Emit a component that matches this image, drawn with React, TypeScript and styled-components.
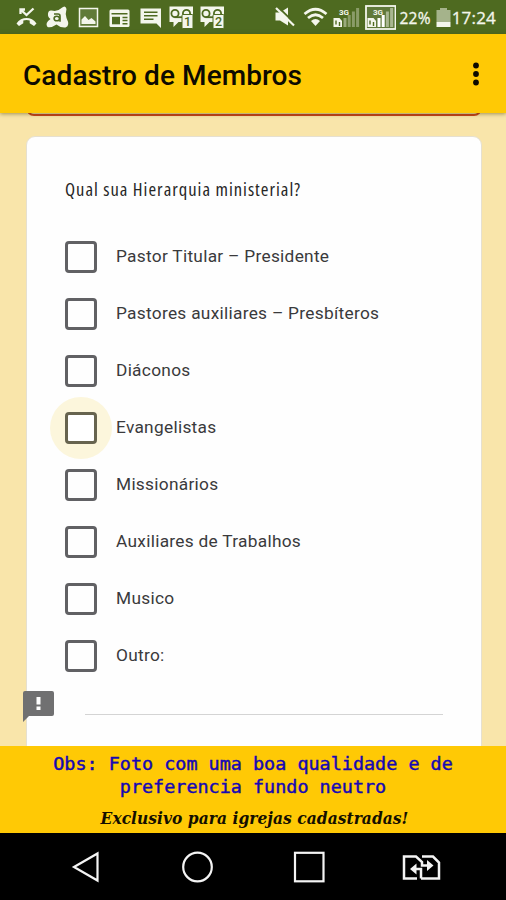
import React from 'react';
import styled, { createGlobalStyle, css } from 'styled-components';

const GlobalStyle = createGlobalStyle`
  * { box-sizing: border-box; }
  body { margin: 0; background: #000; }
`;

const Screen = styled.div`
  display: flex;
  flex-direction: column;
  width: 506px;
  height: 900px;
  overflow: hidden;
  font-family: Roboto, sans-serif;
`;

const StatusBar = styled.div`
  display: flex;
  align-items: center;
  flex: none;
  height: 34px;
  padding-left: 10.5px;
  background: #4e6a20;
  color: #f4f6ec;
`;

const StatusIcon = styled.svg<{ $gap?: number }>`
  flex: none;
  display: block;
  width: 31px;
  height: 34px;
  margin-left: ${(p) => p.$gap ?? 0}px;
  fill: #f4f6ec;
`;

const StatusText = styled.span<{ $size: number; $spacing: number; $gap: number }>`
  margin-left: ${(p) => p.$gap}px;
  font-family: 'Open Sans', sans-serif;
  font-size: ${(p) => p.$size}px;
  letter-spacing: ${(p) => p.$spacing}px;
  line-height: 34px;
  padding-top: 2px;
  white-space: nowrap;
  -webkit-text-stroke: 0.3px #f4f6ec;
`;

const Header = styled.header`
  position: relative;
  z-index: 1;
  display: flex;
  flex: none;
  align-items: center;
  justify-content: space-between;
  height: 79px;
  padding: 2px 23px 0 23px;
  background: #ffc905;
  box-shadow: 0 1px 4px rgba(70, 60, 0, 0.5);
`;

const Title = styled.h1`
  margin: 2px 0 0;
  font-size: 28px;
  font-weight: 500;
  letter-spacing: 0.08px;
  color: #0d0a00;
  white-space: nowrap;
`;

const MenuDots = styled.svg`
  width: 14px;
  height: 26px;
  margin-top: -2px;
  fill: #0d0a00;
`;

const Content = styled.main`
  position: relative;
  flex: 1;
  min-height: 0;
  overflow: hidden;
  padding: 0 24.5px 0 26px;
  background: #f9e5aa;
`;

const PreviousCard = styled.div`
  height: 22px;
  margin-top: -19px;
  border: 2px solid #c8401c;
  border-radius: 8px;
`;

const Card = styled.section`
  height: 660px;
  margin-top: 20px;
  padding: 40px 38px 0 38px;
  border: 1px solid #e6e0d0;
  border-radius: 9px;
  background: #fefefe;
`;

const Question = styled.h2`
  margin: 0 0 27px;
  height: 24px;
  font-family: 'Open Sans', 'Noto Sans', sans-serif;
  font-size: 18.5px;
  font-weight: 400;
  font-stretch: 80%;
  line-height: 24px;
  letter-spacing: 1px;
  color: #262626;
  white-space: nowrap;
`;

const OptionList = styled.div`
  position: relative;
  z-index: 0;
`;

const OptionRow = styled.label`
  display: flex;
  align-items: center;
  gap: 19px;
  height: 57px;
`;

const CheckBox = styled.span<{ $pressed?: boolean }>`
  position: relative;
  width: 32px;
  height: 32px;
  border: 3px solid #616164;
  border-radius: 4px;
  ${(p) =>
    p.$pressed &&
    css`
      border-color: #67644f;
      background: #fff;
      &::before {
        content: '';
        position: absolute;
        z-index: -1;
        inset: -18px;
        border-radius: 50%;
        background: #fcf6dc;
      }
    `}
`;

const OptionLabel = styled.span`
  margin-top: -1px;
  font-size: 17.3px;
  line-height: 24px;
  letter-spacing: 0.29px;
  color: #3a3a3c;
  white-space: nowrap;
`;

const OtherLine = styled.div`
  height: 1px;
  margin: 30px 0 0 20px;
  background: #d4d4d4;
`;

const FeedbackIcon = styled.svg`
  position: absolute;
  left: 23px;
  bottom: 24px;
  width: 31px;
  height: 31px;
`;

const Notice = styled.div`
  display: flex;
  flex: none;
  flex-direction: column;
  align-items: center;
  height: 87px;
  padding-top: 6px;
  background: #ffc905;
  text-align: center;
`;

const NoticeText = styled.p`
  margin: 0;
  width: 420px;
  font-family: 'DejaVu Sans Mono', monospace;
  font-size: 18.45px;
  line-height: 23px;
  color: #1608b4;
  -webkit-text-stroke: 0.45px #1608b4;
`;

const Exclusive = styled.p`
  margin: 9px 0 0 3px;
  font-family: 'DejaVu Serif Condensed', 'DejaVu Serif', serif;
  font-stretch: condensed;
  font-size: 17.2px;
  font-weight: 700;
  font-style: italic;
  line-height: 22px;
  letter-spacing: 0.05px;
  color: #140f00;
  white-space: nowrap;
`;

const NavBar = styled.nav`
  display: flex;
  flex: none;
  align-items: center;
  gap: 72px;
  height: 67px;
  padding-left: 65.5px;
  background: #000;
`;

const NavIcon = styled.svg`
  width: 40px;
  height: 40px;
  fill: none;
  stroke: #f4f4f4;
  stroke-width: 2.2;
`;

const options = [
  { label: 'Pastor Titular – Presidente' },
  { label: 'Pastores auxiliares – Presbíteros' },
  { label: 'Diáconos' },
  { label: 'Evangelistas', pressed: true },
  { label: 'Missionários' },
  { label: 'Auxiliares de Trabalhos' },
  { label: 'Musico' },
  { label: 'Outro:' },
];

const GREEN = '#4e6a20';
const BOX = '-15.5 0 31 34';

function Voicemail({ digit }: { digit: string }) {
  return (
    <StatusIcon viewBox={BOX}>
      <path d="M-12 6.5H11.5V22H-3L-8 27V22H-12Z" />
      <g fill="none" stroke={GREEN} strokeWidth="1.8">
        <circle cx="-6.5" cy="13.5" r="3.6" />
        <circle cx="5" cy="13.5" r="3.6" />
        <path d="M-7 17.2H1" />
      </g>
      <rect x="0.5" y="14.5" width="11" height="14" rx="1" stroke={GREEN} strokeWidth="1" />
      <text x="6" y="26.2" textAnchor="middle" fontFamily="Roboto" fontSize="12.5" fontWeight="500" fill={GREEN}>
        {digit}
      </text>
    </StatusIcon>
  );
}

function Signal({ boxed }: { boxed?: boolean }) {
  return (
    <StatusIcon viewBox={BOX} $gap={boxed ? 3 : 0}>
      {boxed && <rect x="-14.5" y="6" width="29.5" height="23" fill="#60793a" stroke="#f4f6ec" strokeWidth="1.8" />}
      <rect x="-3" y="18" width="3" height="9" fill={boxed ? '#fff' : '#9aaa7c'} />
      <rect x="1.2" y="15" width="3" height="12" fill={boxed ? '#fff' : '#8a9c68'} />
      <rect x="5.4" y="11.5" width="3" height="15.5" fill={boxed ? '#a9b690' : '#8a9c68'} />
      <rect x="9.6" y="8" width="3" height="19" fill={boxed ? '#a9b690' : '#8a9c68'} />
      <path d="M-13 18H-7L-4.5 21V27H-13Z" />
      <path d="M-10.5 20.5V24.5M-7 22V26" stroke={GREEN} strokeWidth="1.4" />
      <text x="-2.5" y="14.5" textAnchor="middle" fontFamily="Roboto" fontSize="8" fontWeight="700">
        3G
      </text>
    </StatusIcon>
  );
}

export default function App() {
  return (
    <>
      <GlobalStyle />
      <Screen>
        <StatusBar>
          <StatusIcon viewBox={BOX}>
            <path d="M-10 23.5C-5 16.2 5 16.2 10 23.5L7.5 26L3.2 23.2V20.6C1 19.9-1 19.9-3.2 20.6V23.2L-7.5 26Z" />
            <path d="M-6 14V9.5H-1.5M-5.5 10L0 15L7 8.5" fill="none" stroke="#f4f6ec" strokeWidth="2.3" />
          </StatusIcon>
          <StatusIcon viewBox={BOX}>
            <path d="M-6 10.5Q0 12 4 8Q8 4.5 9 9Q7.5 14 9 18Q13 26 8 27.5Q3 28-1 24.5Q-6 28-10 27Q-13 23-7 19Q-10 17-9.5 13.5Q-9 10-6 10.5Z" />
            <ellipse cx="-0.7" cy="18.5" rx="2.7" ry="2.3" fill="none" stroke={GREEN} strokeWidth="1.6" />
            <path d="M-3.5 14H0.5Q2.5 14 2.5 16V21.8" fill="none" stroke={GREEN} strokeWidth="1.6" />
          </StatusIcon>
          <StatusIcon viewBox={BOX}>
            <rect x="-9" y="8.5" width="18" height="18" fill="#607a38" stroke="#f4f6ec" strokeWidth="1.5" />
            <path d="M-7 24V19.5L-3.5 16L0 20L3 18L7 21.5V24Z" />
          </StatusIcon>
          <StatusIcon viewBox={BOX}>
            <rect x="-10" y="9.5" width="20" height="17.5" rx="1.5" />
            <path d="M-8 13.8H8M3 17.5H8M3 20.5H8M3 23.8H8" stroke={GREEN} strokeWidth="1.4" />
            <rect x="-7.5" y="16.8" width="8" height="7.5" fill={GREEN} />
          </StatusIcon>
          <StatusIcon viewBox={BOX}>
            <path d="M-10 8.5H10.5V28L6 23.5H-10Z" />
            <path d="M-6.5 12.3H7M-6.5 15.8H7M-6.5 19.3H3" stroke={GREEN} strokeWidth="1.5" />
          </StatusIcon>
          <Voicemail digit="1" />
          <Voicemail digit="2" />

          <StatusIcon viewBox={BOX} $gap={41}>
            <path d="M-9 12.5H-4.5L3.5 7.5V25.5L-4.5 20.5H-9Z" />
            <path d="M-6.5 7L11.5 24.5" stroke={GREEN} strokeWidth="1.8" />
            <path d="M-8.5 8L9.5 25.5" stroke="#f4f6ec" strokeWidth="2.2" />
          </StatusIcon>
          <StatusIcon viewBox={BOX}>
            <g fill="none" stroke="#f4f6ec" strokeWidth="2.7">
              <path d="M-11 14Q0 4.500 11 14" />
              <path d="M-7.5 18Q0 11.500 7.5 18" />
            </g>
            <path d="M-4.5 21Q0 17 4.5 21L0 26Z" />
          </StatusIcon>
          <Signal />
          <Signal boxed />
          <StatusText $size={15.5} $spacing={0.2} $gap={4}>22%</StatusText>
          <StatusIcon viewBox={BOX} $gap={-3}>
            <path d="M-3.5 8H3.5V10H7V22H-7V10H-3.5Z" fill="#a5b38b" />
            <rect x="-7" y="22" width="14" height="5" />
          </StatusIcon>
          <StatusText $size={17} $spacing={0.2} $gap={-7}>17:24</StatusText>
        </StatusBar>

        <Header>
          <Title>Cadastro de Membros</Title>
          <MenuDots viewBox="0 0 14 26">
            <circle cx="7" cy="4.5" r="2.9" />
            <circle cx="7" cy="13" r="2.9" />
            <circle cx="7" cy="21.5" r="2.9" />
          </MenuDots>
        </Header>

        <Content>
          <PreviousCard />
          <Card>
            <Question>Qual sua Hierarquia ministerial?</Question>
            <OptionList>
              {options.map((o) => (
                <OptionRow key={o.label}>
                  <CheckBox $pressed={o.pressed} />
                  <OptionLabel>{o.label}</OptionLabel>
                </OptionRow>
              ))}
            </OptionList>
            <OtherLine />
          </Card>
          <FeedbackIcon viewBox="0 0 31 31">
            <path d="M2 0H29Q31 0 31 2V23Q31 25 29 25H6L0 31V2Q0 0 2 0Z" fill="#707071" />
            <path d="M13.5 6H17.5V13.5H13.5ZM13.5 15.5H17.5V19H13.5Z" fill="#fff" />
          </FeedbackIcon>
        </Content>

        <Notice>
          <NoticeText>Obs: Foto com uma boa qualidade e de preferencia fundo neutro</NoticeText>
          <Exclusive>Exclusivo para igrejas cadastradas!</Exclusive>
        </Notice>

        <NavBar>
          <NavIcon viewBox="0 0 40 40">
            <path d="M8 20L31.5 6.500V33.500Z" />
          </NavIcon>
          <NavIcon viewBox="0 0 40 40">
            <circle cx="19.5" cy="20" r="14.3" />
          </NavIcon>
          <NavIcon viewBox="0 0 40 40">
            <rect x="5" y="5.8" width="28.5" height="28.5" />
          </NavIcon>
          <NavIcon viewBox="0 0 40 40">
            <path d="M15 31.5H2V9.5H14L20 15V18.5H27M19 31.5H37V15.500L31 9.5H20M19 31.5V22H11" strokeWidth="2.5" />
            <path d="M25 13L31.5 18.5L25 24ZM14.500 16.500L8 22L14.500 27.5Z" fill="#f4f4f4" stroke="none" />
          </NavIcon>
        </NavBar>
      </Screen>
    </>
  );
}
